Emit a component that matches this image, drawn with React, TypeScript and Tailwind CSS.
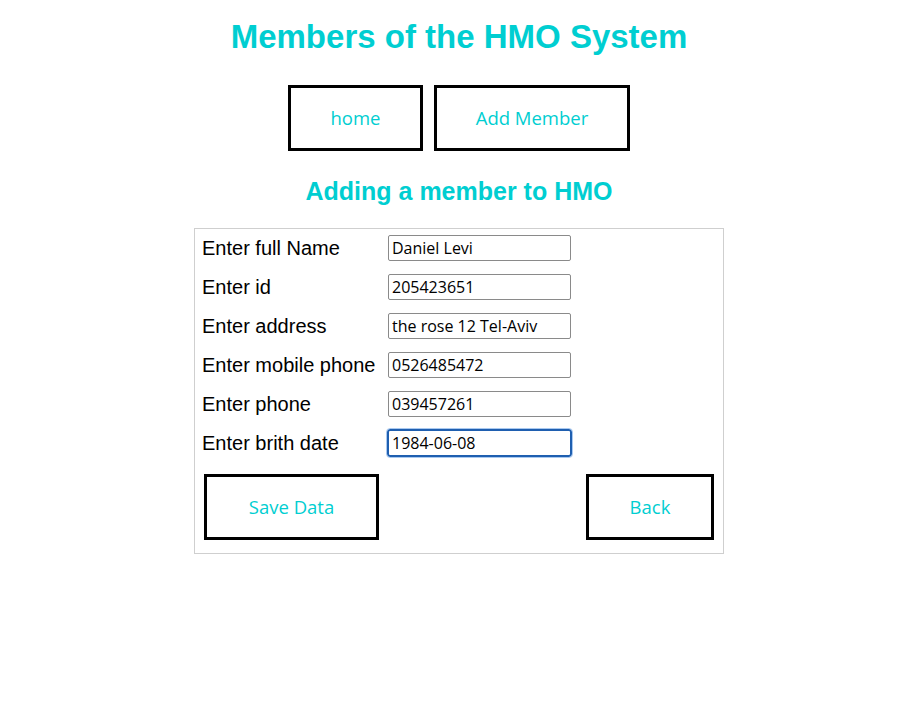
const fields = [
  { label: 'Enter full Name', value: 'Daniel Levi' },
  { label: 'Enter id', value: '205423651' },
  { label: 'Enter address', value: 'the rose 12 Tel-Aviv' },
  { label: 'Enter mobile phone', value: '0526485472' },
  { label: 'Enter phone', value: '039457261' },
  { label: 'Enter brith date', value: '1984-06-08', focused: true },
];

const inputFont = { fontFamily: '"Open Sans", "Noto Sans", sans-serif' };

function BoxButton({ label, width }: { label: string; width: string }) {
  return (
    <button
      type="button"
      className={`${width} h-[66px] border-[3px] border-black bg-white text-[18.5px] text-[#00ced1] font-['Open_Sans',sans-serif]`}
    >
      {label}
    </button>
  );
}

export default function App() {
  return (
    <div className="min-h-[709px] bg-white pl-[20px] flex flex-col items-center font-['Liberation_Sans',Arial,sans-serif]">
      <h1 className="mt-[18px] text-[33px] leading-[37px] font-bold text-[#00ced1]">Members of the HMO System</h1>

      <nav className="mt-[30px] flex gap-[11px]">
        <BoxButton label="home" width="w-[135px]" />
        <BoxButton label="Add Member" width="w-[196px]" />
      </nav>

      <h2 className="mt-[26px] text-[25px] leading-[29px] font-bold text-[#00ced1]">Adding a member to HMO</h2>

      <form className="mt-[22px] w-[530px] border border-[#cfcfcf] pt-[6px] pb-[13px] px-[7px]">
        <div className="flex flex-col gap-[13px]">
          {fields.map((f) => (
            <div key={f.label} className="flex items-center h-[26px]">
              <label className="w-[186px] text-[20px] leading-[24px] text-black">{f.label}</label>
              <input
                readOnly
                value={f.value}
                style={inputFont}
                className={
                  f.focused
                    ? 'w-[185px] h-[28px] -ml-[1px] rounded-[3px] border-2 border-[#1f5fb0] px-[3px] text-[16px] text-black outline outline-1 outline-[#a9c9f0] outline-offset-0'
                    : 'w-[183px] h-[26px] rounded-[2px] border border-[#8a8a8a] px-[3px] text-[16px] text-black outline-none'
                }
              />
            </div>
          ))}
        </div>
        <div className="mt-[18px] px-[2px] flex justify-between">
          <BoxButton label="Save Data" width="w-[175px]" />
          <BoxButton label="Back" width="w-[128px]" />
        </div>
      </form>
    </div>
  );
}
